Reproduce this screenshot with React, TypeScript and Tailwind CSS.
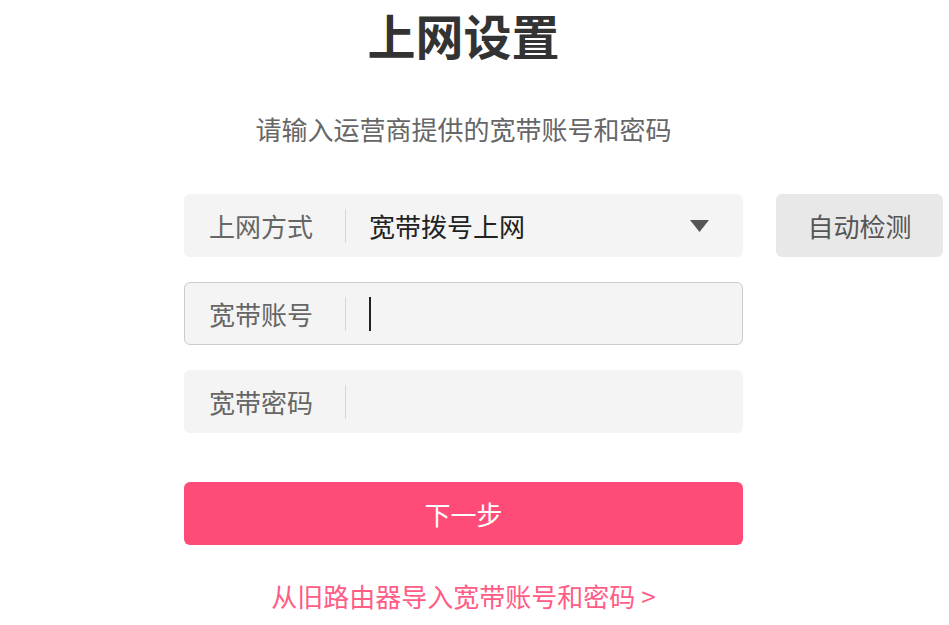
const FONT = "font-['Microsoft_YaHei','Noto_Sans_CJK_SC',sans-serif]";

function Field(props: { label: string; children?: React.ReactNode; focused?: boolean }) {
  return (
    <div
      className={
        "flex h-[63px] items-center rounded-[6px] bg-[#f4f4f4] pl-6 pr-8 " +
        (props.focused ? "border border-[#cccccc]" : "border border-transparent")
      }
    >
      <span className="w-[136px] shrink-0 text-[26px] text-[#666666]">{props.label}</span>
      <span className="h-[34px] w-px shrink-0 bg-[#d6d6d6]" />
      <div className="flex flex-1 items-center pl-[23px]">{props.children}</div>
    </div>
  );
}

export default function App() {
  return (
    <div className={"min-h-[625px] w-[949px] bg-white " + FONT}>
      <div className="ml-[184px] flex w-[559px] flex-col">
        <h1 className="mt-[4px] text-center text-[48px] font-bold leading-[60px] text-[#333333]">上网设置</h1>
        <p className="mt-[48px] text-center text-[26px] leading-[34px] text-[#666666]">
          请输入运营商提供的宽带账号和密码
        </p>

        <div className="mt-[48px] flex flex-col gap-[25px]">
          <div className="relative">
            <Field label="上网方式">
              <span className="flex-1 text-[26px] text-[#222222]">宽带拨号上网</span>
              <svg width="19" height="12" viewBox="0 0 19 12" className="mr-[1px]">
                <path d="M0 0 H19 L9.5 12 Z" fill="#555555" />
              </svg>
            </Field>
            <button className="absolute left-[592px] top-0 h-[63px] w-[167px] rounded-[6px] bg-[#e8e8e8] text-[26px] text-[#555555]">
              自动检测
            </button>
          </div>
          <Field label="宽带账号" focused>
            <span className="h-[34px] w-[2px] bg-[#222222]" />
          </Field>
          <Field label="宽带密码" />
        </div>

        <button className="mt-[49px] h-[63px] w-full rounded-[6px] bg-[#ff4b77] text-[26px] text-white">
          下一步
        </button>

        <p className="mt-[34px] text-center text-[26px] leading-[34px] text-[#ff5c86]">
          从旧路由器导入宽带账号和密码 &gt;
        </p>
      </div>
    </div>
  );
}
